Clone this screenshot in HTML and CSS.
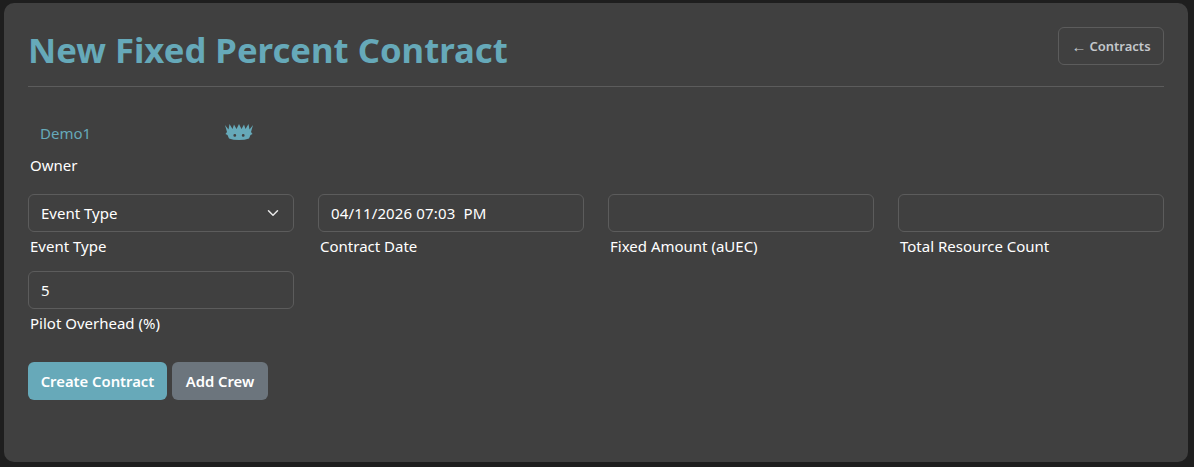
FILE: index.html
```html
<!DOCTYPE html>
<html lang="en">
<head>
    <meta charset="UTF-8">
    <meta name="viewport" content="width=device-width, initial-scale=1">
    <title>New Fixed Percent Contract</title>
    <link rel="stylesheet" href="styles.css">
</head>
<body>

    <div class="card">
        <div class="page-header">
            <h1>New Fixed Percent Contract</h1>
            <a class="back-btn" href="#"><span class="arrow">←</span> Contracts</a>
        </div>

        <div class="owner">
            <div class="owner-row">
                <span class="owner-name">Demo1</span>
                <svg class="crown" viewBox="0 0 28 16" aria-hidden="true">
                    <path fill-rule="evenodd" d="M0 1 L3.5 5.5 L4.5 0 L7.5 5 L9 0.5 L11.5 5 L14 0 L16.5 5 L19 0.5 L20.5 5 L23.5 0 L24.5 5.5 L28 1 L26 8 L27.5 10 L25.5 11 L24 14.5 Q20 16 14 16 Q8 16 4 14.5 L2.5 11 L0.5 10 L2 8 Z M9.8 10 A1.4 1.4 0 1 0 9.8 12.8 A1.4 1.4 0 1 0 9.8 10 Z M18.2 10 A1.4 1.4 0 1 0 18.2 12.8 A1.4 1.4 0 1 0 18.2 10 Z"/>
                </svg>
            </div>
            <label>Owner</label>
        </div>

        <div class="form-grid">
            <div class="form-group">
                <div class="select-wrap">
                    <select>
                        <option>Event Type</option>
                    </select>
                    <svg class="chevron" viewBox="0 0 16 16" aria-hidden="true">
                        <path d="M2 5l6 6 6-6" fill="none" stroke="currentColor" stroke-width="2" stroke-linecap="round" stroke-linejoin="round"/>
                    </svg>
                </div>
                <label>Event Type</label>
            </div>
            <div class="form-group">
                <input type="text" class="date-input" value="04/11/2026 07:03  PM">
                <label>Contract Date</label>
            </div>
            <div class="form-group">
                <input type="text">
                <label>Fixed Amount (aUEC)</label>
            </div>
            <div class="form-group">
                <input type="text">
                <label>Total Resource Count</label>
            </div>
            <div class="form-group">
                <input type="text" value="5">
                <label>Pilot Overhead (%)</label>
            </div>
        </div>

        <div class="actions">
            <button class="btn-primary">Create Contract</button>
            <button class="btn-secondary">Add Crew</button>
        </div>
    </div>

</body>
</html>
```

FILE: styles.css
```css
* {
    box-sizing: border-box;
}
body {
    margin: 0;
    padding: 3px 6px 5px 4px;
    height: 467px;
    overflow: hidden;
    background-color: #1e1e1e;
    color: #fff;
    font-family: "Noto Sans", Arial, sans-serif;
    font-size: 15px;
}
.card {
    height: 459px;
    padding: 24px;
    background-color: #404040;
    border-radius: 10px;
}
.page-header {
    display: flex;
    justify-content: space-between;
    align-items: flex-start;
    height: 60px;
    border-bottom: 1px solid #5c5c5c;
}
h1 {
    margin: 0;
    color: #66a9b9;
    font-size: 34.7px;
    font-weight: 700;
    line-height: 46px;
}
.back-btn {
    display: flex;
    align-items: center;
    justify-content: center;
    gap: 3px;
    width: 106px;
    height: 38px;
    border: 1px solid #5c5c5c;
    border-radius: 6px;
    color: #c4c8cc;
    font-size: 13px;
    font-weight: 600;
    text-decoration: none;
}
.arrow {
    font-family: "Liberation Sans", Arial, sans-serif;
    font-size: 15px;
    font-weight: 400;
}
.owner {
    margin-top: 33px;
}
.owner-row {
    display: flex;
    align-items: center;
    height: 26px;
}
.owner-name {
    width: 197px;
    padding-left: 12px;
    color: #66a9b9;
}
.crown {
    width: 28px;
    height: 16px;
    margin-bottom: 2px;
    fill: #66a9b9;
}
label {
    display: block;
    margin-top: 2px;
    padding-left: 2px;
    line-height: 24px;
}
.owner label {
    margin-top: 7px;
}
.form-grid {
    display: grid;
    grid-template-columns: repeat(4, 266px);
    column-gap: 24px;
    row-gap: 13px;
    margin-top: 17px;
}
input, select {
    display: block;
    width: 100%;
    height: 38px;
    padding: 6px 12px;
    background-color: #404040;
    border: 1px solid #5c5c5c;
    border-radius: 6px;
    color: #fff;
    font-family: inherit;
    font-size: inherit;
    appearance: none;
}
.date-input {
    letter-spacing: 0.15px;
}
.select-wrap {
    position: relative;
}
.chevron {
    position: absolute;
    top: 13px;
    right: 15px;
    width: 12px;
    height: 12px;
    color: #e8e8e8;
}
.actions {
    display: flex;
    gap: 5px;
    margin-top: 27px;
}
button {
    height: 38px;
    padding: 0;
    border: 0;
    border-radius: 6px;
    color: #fff;
    font-family: inherit;
    font-size: 14.8px;
    font-weight: 600;
    white-space: nowrap;
}
.btn-primary {
    width: 139px;
    background-color: #67a9b9;
}
.btn-secondary {
    width: 96px;
    background-color: #6c757d;
}
```
